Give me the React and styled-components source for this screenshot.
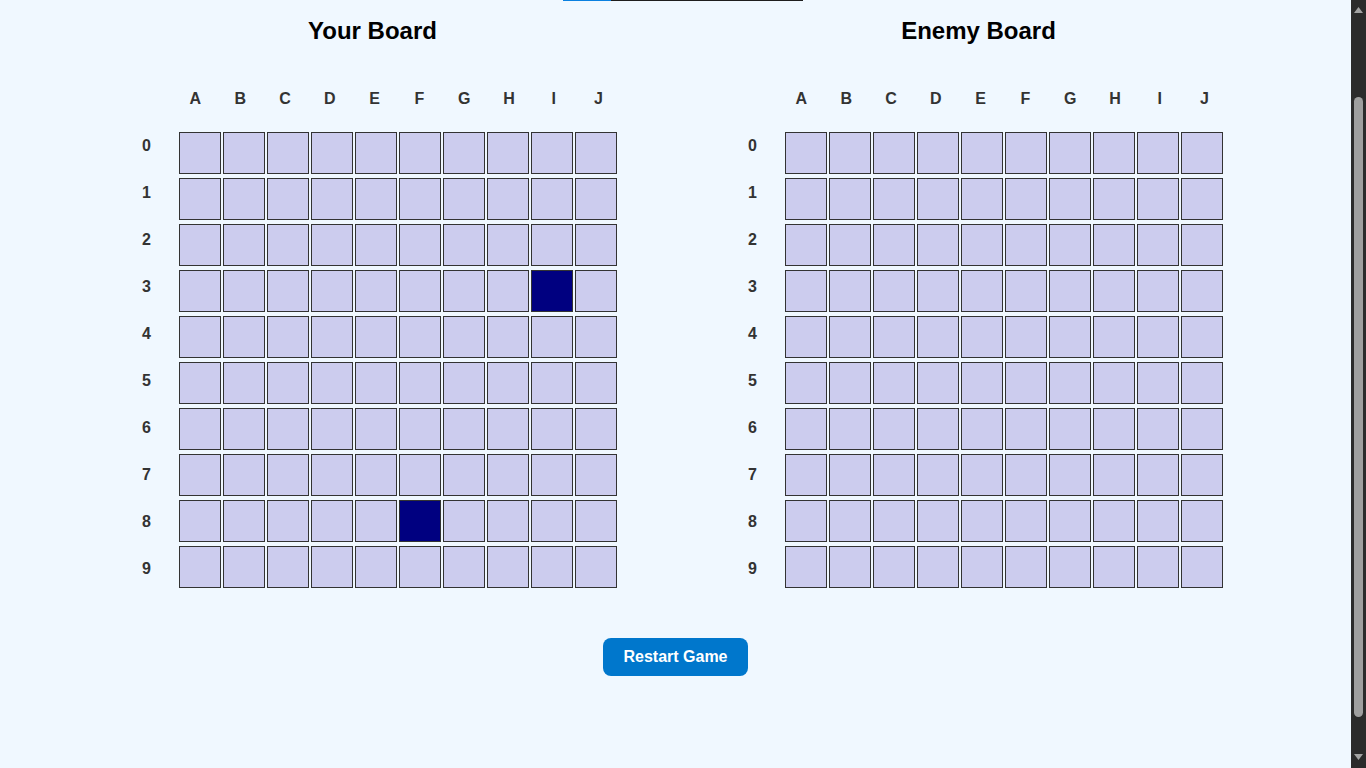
import React, { useLayoutEffect } from "react";
import styled, { createGlobalStyle } from "styled-components";

const GlobalStyle = createGlobalStyle`
  html {
    color-scheme: dark;
  }
  body {
    margin: 0;
    background: #f0f8ff;
    color: #000;
    font-family: "Liberation Sans", Arial, sans-serif;
  }
`;

const Page = styled.div`
  margin-right: 15px;
  display: flex;
  flex-direction: column;
  align-items: center;
  padding-bottom: 133px;
`;

const Header = styled.header`
  display: flex;
  flex-direction: column;
  align-items: center;
  padding-top: 20px;
`;

const MainTitle = styled.h1`
  margin: 0;
  font-size: 32px;
  line-height: 40px;
  color: #000;
`;

const Status = styled.p`
  margin: 8px 0 0;
  font-size: 16px;
  line-height: 20px;
  color: #333;
`;

const Progress = styled.div`
  margin-top: 9px;
  margin-left: 15px;
  width: 240px;
  height: 3px;
  background: #1e1e1e;
  display: flex;
`;

const ProgressFill = styled.div`
  height: 100%;
  background: #0a80e0;
`;

const Boards = styled.div`
  margin-top: 16px;
  display: flex;
  gap: 116px;
  justify-content: center;
`;

const Board = styled.section`
  width: 490px;
  display: flex;
  flex-direction: column;
  align-items: flex-start;
`;

const BoardTitle = styled.h2`
  margin: 0;
  width: 100%;
  text-align: center;
  font-size: 24px;
  line-height: 28px;
  font-weight: bold;
  color: #000;
`;

const ColLabels = styled.div`
  margin-top: 44px;
  padding-left: 45.5px;
  display: flex;
`;

const ColLabel = styled.div`
  width: 44.8px;
  flex: none;
  text-align: center;
  font-size: 16px;
  line-height: 20px;
  font-weight: bold;
  color: #333;
`;

const BoardBody = styled.div`
  margin-top: 13px;
  display: flex;
  gap: 13.5px;
  align-items: flex-start;
`;

const RowLabels = styled.div`
  width: 38px;
  display: flex;
  flex-direction: column;
`;

const RowLabel = styled.div`
  height: 47px;
  display: flex;
  align-items: center;
  justify-content: center;
  font-size: 16px;
  font-weight: bold;
  color: #333;
`;

const Grid = styled.div`
  margin-top: 10px;
  display: grid;
  grid-template-columns: repeat(10, 42px);
  grid-auto-rows: 42px;
  column-gap: 2px;
  row-gap: 4px;
`;

const Cell = styled.div`
  box-sizing: border-box;
  border: 1px solid #333;
  background: ${(p) => (p.$ship ? "#000080" : "#ccccee")};
`;

const Footer = styled.div`
  margin-top: 46px;
  display: flex;
  justify-content: center;
`;

const RestartButton = styled.button`
  font-family: "Liberation Sans", Arial, sans-serif;
  font-size: 16px;
  line-height: 18px;
  font-weight: bold;
  color: #fff;
  background: #0077cc;
  border: none;
  border-radius: 8px;
  padding: 10px 20px;
  width: 145px;
  cursor: pointer;
`;

/* Drawing of the window's scrollbar, lying over the page's right edge */
const ScrollTrack = styled.div`
  position: fixed;
  top: 0;
  right: 0;
  width: 15px;
  height: 100vh;
  background: #2b2b2b;
  pointer-events: none;
  z-index: 10;
`;

const ScrollThumb = styled.div`
  position: absolute;
  left: 3px;
  width: 9px;
  top: 97px;
  height: 620px;
  background: #9f9f9f;
  border-radius: 5px;
`;

const ScrollArrow = styled.svg`
  position: absolute;
  left: 3px;
  width: 9px;
  height: 6px;
  ${(p) => (p.$down ? "bottom: 8px;" : "top: 7px;")}
`;

const LETTERS = ["A", "B", "C", "D", "E", "F", "G", "H", "I", "J"];
const ROWS = [0, 1, 2, 3, 4, 5, 6, 7, 8, 9];

function GameBoard({ title, ships }) {
  return (
    <Board>
      <BoardTitle>{title}</BoardTitle>
      <ColLabels>
        {LETTERS.map((l) => (
          <ColLabel key={l}>{l}</ColLabel>
        ))}
      </ColLabels>
      <BoardBody>
        <RowLabels>
          {ROWS.map((r) => (
            <RowLabel key={r}>{r}</RowLabel>
          ))}
        </RowLabels>
        <Grid>
          {ROWS.map((r) =>
            LETTERS.map((l, c) => (
              <Cell key={`${r}-${c}`} $ship={ships.has(`${r}-${c}`)} />
            ))
          )}
        </Grid>
      </BoardBody>
    </Board>
  );
}

export default function App() {
  useLayoutEffect(() => {
    window.scrollTo(0, 99);
  }, []);

  const myShips = new Set(["3-8", "8-5"]);
  const enemyShips = new Set();

  return (
    <>
      <GlobalStyle />
      <Page>
        <Header>
          <MainTitle>Battleship</MainTitle>
          <Status>Place your ships: 1 of 5</Status>
          <Progress>
            <ProgressFill style={{ width: "20%" }} />
          </Progress>
        </Header>
        <Boards>
          <GameBoard title="Your Board" ships={myShips} />
          <GameBoard title="Enemy Board" ships={enemyShips} />
        </Boards>
        <Footer>
          <RestartButton>Restart Game</RestartButton>
        </Footer>
      </Page>
      <ScrollTrack>
        <ScrollArrow viewBox="0 0 9 6">
          <polygon points="4.5,0 9,6 0,6" fill="#a3a3a3" />
        </ScrollArrow>
        <ScrollThumb />
        <ScrollArrow $down viewBox="0 0 9 6">
          <polygon points="0,0 9,0 4.5,6" fill="#a3a3a3" />
        </ScrollArrow>
      </ScrollTrack>
    </>
  );
}
